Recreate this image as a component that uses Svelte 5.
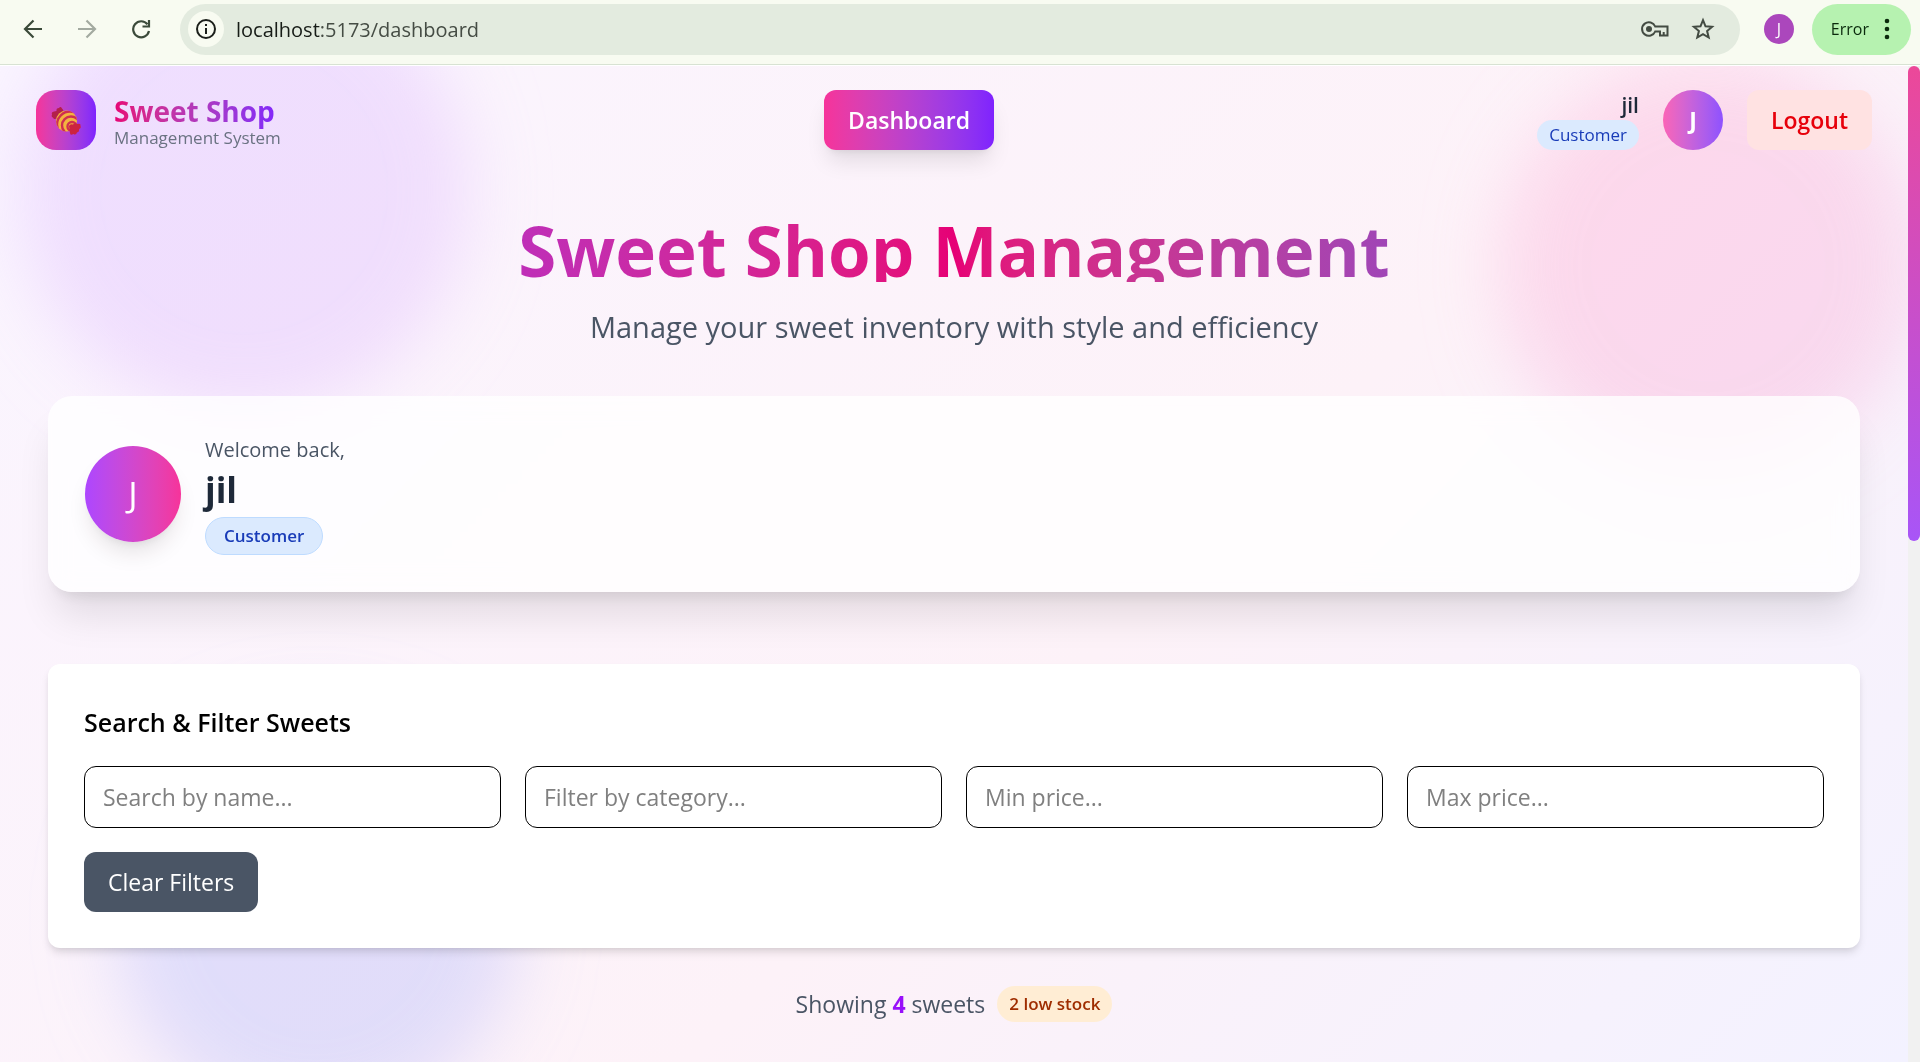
<script>
  let name = $state('');
  let category = $state('');
  let minPrice = $state('');
  let maxPrice = $state('');

  function clearFilters() {
    name = category = minPrice = maxPrice = '';
  }
</script>

<div class="window">
  <div class="toolbar">
    <div class="nav-icons">
      <button class="tool" aria-label="Back">
        <svg width="20" height="20" viewBox="0 0 20 20" fill="none" stroke="#3b4a3a" stroke-width="2.2"><path d="M19 10H2.500M10.500 1.500L2 10l8.500 8.500" /></svg>
      </button>
      <button class="tool" aria-label="Forward">
        <svg width="20" height="20" viewBox="0 0 20 20" fill="none" stroke="#a3aaa0" stroke-width="2.2"><path d="M1 10h16.500M9.500 1.500L18 10l-8.500 8.500" /></svg>
      </button>
      <button class="tool" aria-label="Reload">
        <svg width="20" height="20" viewBox="0 0 20 20" fill="none" stroke="#3b4a3a" stroke-width="2.2"><path d="M18 12A8 8 0 1 1 16.500 5.300M18 1v6.500h-6.500" /></svg>
      </button>
    </div>
    <div class="address">
      <button class="info" aria-label="View site information">
        <svg width="22" height="22" viewBox="0 0 22 22" fill="none" stroke="#1b1f1a" stroke-width="2"><circle cx="11" cy="11" r="9" /><path d="M11 10v6M11 6v2" /></svg>
      </button>
      <span class="url"><b>localhost</b>:5173/dashboard</span>
      <button class="tool" aria-label="Manage passwords">
        <svg width="28" height="18" viewBox="0 0 28 18" fill="none" stroke="#434b42" stroke-width="2"><path d="M14.200 6.500A6.800 6.800 0 1 0 14.200 11.500H19V15.500H26.500V6.500ZM22.700 15.500v-3.500" /><circle cx="8" cy="9" r="3" fill="#434b42" stroke="none" /></svg>
      </button>
      <button class="tool" aria-label="Bookmark this tab">
        <svg width="24" height="24" viewBox="0 0 24 24" fill="none" stroke="#434b42" stroke-width="2"><path d="M12 3.200l2.500 6.100 6.600.5-5 4.300 1.600 6.400L12 17.100l-5.700 3.400 1.600-6.400-5-4.300 6.600-.5z" /></svg>
      </button>
    </div>
    <button class="profile">J</button>
    <button class="error">
      Error
      <svg width="6" height="22" viewBox="0 0 6 22" fill="#0a2a0c"><circle cx="3" cy="3" r="2.300" /><circle cx="3" cy="11" r="2.300" /><circle cx="3" cy="19" r="2.300" /></svg>
    </button>
  </div>

  <div class="viewport">
    <div class="page">
      <div class="blob purple"></div>
      <div class="blob pink"></div>
      <div class="blob blue"></div>

      <header>
        <div class="brand">
          <div class="logo">
            <svg width="32" height="32" viewBox="0 0 32 32">
              <defs>
                <clipPath id="candy-ball"><circle cx="16.500" cy="17" r="10.500" /></clipPath>
              </defs>
              <path d="M10 14Q8 16 6 14.500Q4 16 3 13.500Q1 13 2 10.500Q1 8 4 7.500L6.500 7Q6 4 9 4Q10.500 2 12 4.500Q14 6 13.500 10z" fill="#b3204a" />
              <circle cx="16.500" cy="17" r="10.500" fill="#f3b53f" />
              <g clip-path="url(#candy-ball)" fill="none" stroke="#cf2f50" stroke-width="2.400">
                <circle cx="22" cy="22.500" r="4.500" />
                <circle cx="21" cy="21.500" r="9" />
                <circle cx="20" cy="20.500" r="13" />
              </g>
              <path d="M19 22Q20 19.500 23 20.500Q25 18.500 27.500 20Q31 19 30.500 22Q31.500 24 29 25Q29.500 28 27 28.500Q26 31.500 23.500 30Q20 32 20 29z" fill="#cc2340" />
            </svg>
          </div>
          <div>
            <div class="brand-name">Sweet Shop</div>
            <div class="brand-sub">Management System</div>
          </div>
        </div>
        <a class="nav-link" href="#dashboard">Dashboard</a>
        <div class="account">
          <div class="who">
            <div class="who-name">jil</div>
            <span class="who-role">Customer</span>
          </div>
          <div class="avatar">J</div>
          <button class="logout">Logout</button>
        </div>
      </header>

      <main>
        <h1>Sweet Shop Management</h1>
        <p class="tagline">Manage your sweet inventory with style and efficiency</p>

        <section class="welcome">
          <div class="big-avatar">J</div>
          <div>
            <p class="hello">Welcome back,</p>
            <h2>jil</h2>
            <span class="role">Customer</span>
          </div>
        </section>

        <section class="filters">
          <h3>Search &amp; Filter Sweets</h3>
          <div class="fields">
            <input type="text" aria-label="Search by name" placeholder="Search by name..." bind:value={name} />
            <input type="text" aria-label="Filter by category" placeholder="Filter by category..." bind:value={category} />
            <input type="text" aria-label="Min price" placeholder="Min price..." bind:value={minPrice} />
            <input type="text" aria-label="Max price" placeholder="Max price..." bind:value={maxPrice} />
          </div>
          <button class="clear" onclick={clearFilters}>Clear Filters</button>
        </section>

        <div class="summary">
          <span>Showing <strong>4</strong> sweets</span>
          <span class="low">2 low stock</span>
        </div>
      </main>
    </div>
    <div class="scrollbar"><div class="thumb"></div></div>
  </div>
</div>

<style>
  :global(body) {
    margin: 0;
  }
  .window,
  .window :global(*) {
    box-sizing: border-box;
  }
  .window {
    display: flex;
    flex-direction: column;
    height: 100vh;
    overflow: hidden;
    font-family: 'Open Sans', 'Noto Sans', sans-serif;
    font-size: 23px;
    color: #000;
  }
  button {
    font: inherit;
    border: 0;
    padding: 0;
    background: none;
    cursor: pointer;
  }
  svg {
    display: block;
  }

  .toolbar {
    display: flex;
    align-items: center;
    flex: none;
    height: 65px;
    padding: 0 9px 6px 23px;
    background: #f8fbf1;
    border-bottom: 1px solid #d8e2d3;
  }
  .nav-icons {
    display: flex;
    gap: 34px;
    margin-right: 29px;
  }
  .address {
    display: flex;
    align-items: center;
    flex: 1;
    gap: 22px;
    height: 51px;
    padding: 0 25px 0 8px;
    border-radius: 26px;
    background: #e3ebdf;
  }
  .info {
    display: grid;
    place-items: center;
    width: 36px;
    height: 36px;
    margin-right: -10px;
    border-radius: 50%;
    background: #f8fbf1;
  }
  .url {
    flex: 1;
    font-size: 20px;
    color: #454c44;
  }
  .url b {
    font-weight: 400;
    color: #171c17;
  }
  .profile {
    width: 30px;
    height: 30px;
    margin: 0 18px 0 24px;
    border-radius: 50%;
    background: #ab47bc;
    color: #fff;
    font-size: 16px;
  }
  .error {
    display: flex;
    align-items: center;
    gap: 15px;
    height: 51px;
    padding: 0 21px 0 19px;
    border-radius: 26px;
    background: #b6f2b0;
    color: #0a2a0c;
    font-size: 16px;
  }

  .viewport {
    display: flex;
    flex: 1;
    min-height: 0;
    border-top: 1px solid #fff;
  }
  .scrollbar {
    flex: none;
    width: 12px;
    background: #f1f1f1;
  }
  .thumb {
    height: 47.7%;
    border-radius: 6px;
    background: linear-gradient(#ec4899, #a855f7);
  }
  .page {
    position: relative;
    flex: 1;
    overflow: hidden;
    background: linear-gradient(135deg, #faf5ff, #fdf2f8 58%, #f3f2ff);
  }
  .blob {
    position: absolute;
    border-radius: 50%;
    filter: blur(36px);
    mix-blend-mode: multiply;
    opacity: 0.3;
  }
  .purple {
    left: 20px;
    top: -100px;
    width: 448px;
    height: 448px;
    background: #dab2ff;
  }
  .pink {
    right: -6px;
    top: -6px;
    width: 412px;
    height: 412px;
    background: #fda5d5;
  }
  .blue {
    left: 114px;
    top: 650px;
    width: 404px;
    height: 404px;
    background: #a3b3ff;
  }

  header {
    position: relative;
    display: flex;
    align-items: center;
    justify-content: space-between;
    padding: 24px 36px;
  }
  .brand,
  .account {
    display: flex;
    align-items: center;
  }
  .brand {
    gap: 18px;
  }
  .logo {
    display: grid;
    place-items: center;
    width: 60px;
    height: 60px;
    border-radius: 20px;
    background: linear-gradient(to right in oklab, #f6339a, #7f22fe);
  }
  .brand-name {
    font-size: 28px;
    font-weight: 700;
    line-height: 36px;
    color: transparent;
    background: linear-gradient(to right in oklab, #e60076, #7f22fe);
    background-clip: text;
  }
  .brand-sub {
    font-size: 17px;
    line-height: 18px;
    color: #6a7282;
  }
  .nav-link {
    padding: 0 24px;
    border-radius: 12px;
    background: linear-gradient(to right in oklab, #f6339a, #7f22fe);
    box-shadow: 0 15px 22px -4px rgb(0 0 0 / 0.1), 0 6px 9px -6px rgb(0 0 0 / 0.1);
    color: #fff;
    font-weight: 600;
    line-height: 60px;
    text-decoration: none;
  }
  .account {
    gap: 24px;
  }
  .who {
    text-align: right;
  }
  .who-name {
    font-size: 21px;
    font-weight: 600;
    line-height: 30px;
    color: #1e2939;
  }
  .who-role {
    display: block;
    padding: 0 12px;
    border-radius: 15px;
    background: #dbeafe;
    color: #193cb8;
    font-size: 17px;
    line-height: 30px;
  }
  .avatar {
    width: 60px;
    height: 60px;
    border-radius: 50%;
    background: linear-gradient(to right in oklab, #fb64b6, #8e51ff);
    color: #fff;
    font-weight: 700;
    line-height: 60px;
    text-align: center;
  }
  .logout {
    height: 60px;
    padding: 0 24px;
    border-radius: 12px;
    background: #ffe2e2;
    color: #e7000b;
    font-weight: 600;
  }

  main {
    position: relative;
    padding: 36px 48px;
  }
  h1 {
    height: 72px;
    margin: 0;
    font-size: 69px;
    font-weight: 700;
    line-height: 80px;
    text-align: center;
    color: transparent;
    background: linear-gradient(to right in oklab, #9810fa, #e60076, #4f39f6);
    background-clip: text;
  }
  .tagline {
    margin: 24px 0 48px;
    font-size: 29px;
    line-height: 42px;
    text-align: center;
    color: #4a5565;
  }
  .welcome {
    display: flex;
    align-items: center;
    gap: 24px;
    padding: 37px;
    border-radius: 24px;
    background: rgb(255 255 255 / 0.8);
    backdrop-filter: blur(12px);
    box-shadow: 0 30px 38px -7px rgb(0 0 0 / 0.1), 0 12px 15px -9px rgb(0 0 0 / 0.1);
  }
  .big-avatar {
    width: 96px;
    height: 96px;
    border-radius: 50%;
    background: linear-gradient(to right in oklab, #ad46ff, #f6339a);
    box-shadow: 0 15px 22px -4px rgb(0 0 0 / 0.1), 0 6px 9px -6px rgb(0 0 0 / 0.1);
    color: #fff;
    font-size: 35px;
    line-height: 96px;
    text-align: center;
  }
  .hello {
    margin: 0;
    font-size: 20px;
    line-height: 34px;
    color: #4a5565;
  }
  h2 {
    margin: 0;
    font-size: 35px;
    font-weight: 700;
    line-height: 46px;
    color: #1e2939;
  }
  .role {
    display: inline-block;
    margin-top: 4px;
    padding: 0 18px;
    border: 1px solid #bedbff;
    border-radius: 19px;
    background: #dbeafe;
    color: #193cb8;
    font-size: 17px;
    font-weight: 600;
    line-height: 36px;
  }
  .filters {
    margin-top: 72px;
    padding: 36px;
    border-radius: 12px;
    background: #fff;
    box-shadow: 0 6px 9px -1px rgb(0 0 0 / 0.1), 0 3px 6px -3px rgb(0 0 0 / 0.1);
  }
  h3 {
    margin: 0 0 22px;
    font-size: 25px;
    font-weight: 600;
    line-height: 44px;
  }
  .fields {
    display: grid;
    grid-template-columns: repeat(4, 1fr);
    gap: 24px;
  }
  input {
    width: 100%;
    height: 62px;
    padding: 0 18px;
    border: 1px solid #000;
    border-radius: 12px;
    background: #fff;
    font: inherit;
  }
  input::placeholder {
    color: #808080;
  }
  .clear {
    height: 60px;
    margin-top: 24px;
    padding: 0 24px;
    border-radius: 12px;
    background: #4a5565;
    color: #fff;
  }
  .summary {
    display: flex;
    align-items: center;
    justify-content: center;
    gap: 12px;
    margin-top: 38px;
    color: #4a5565;
  }
  .summary strong {
    font-weight: 700;
    color: #9810fa;
  }
  .low {
    padding: 0 12px;
    border-radius: 18px;
    background: #ffedd4;
    color: #9f2d00;
    font-size: 17px;
    font-weight: 600;
    line-height: 36px;
  }
</style>
